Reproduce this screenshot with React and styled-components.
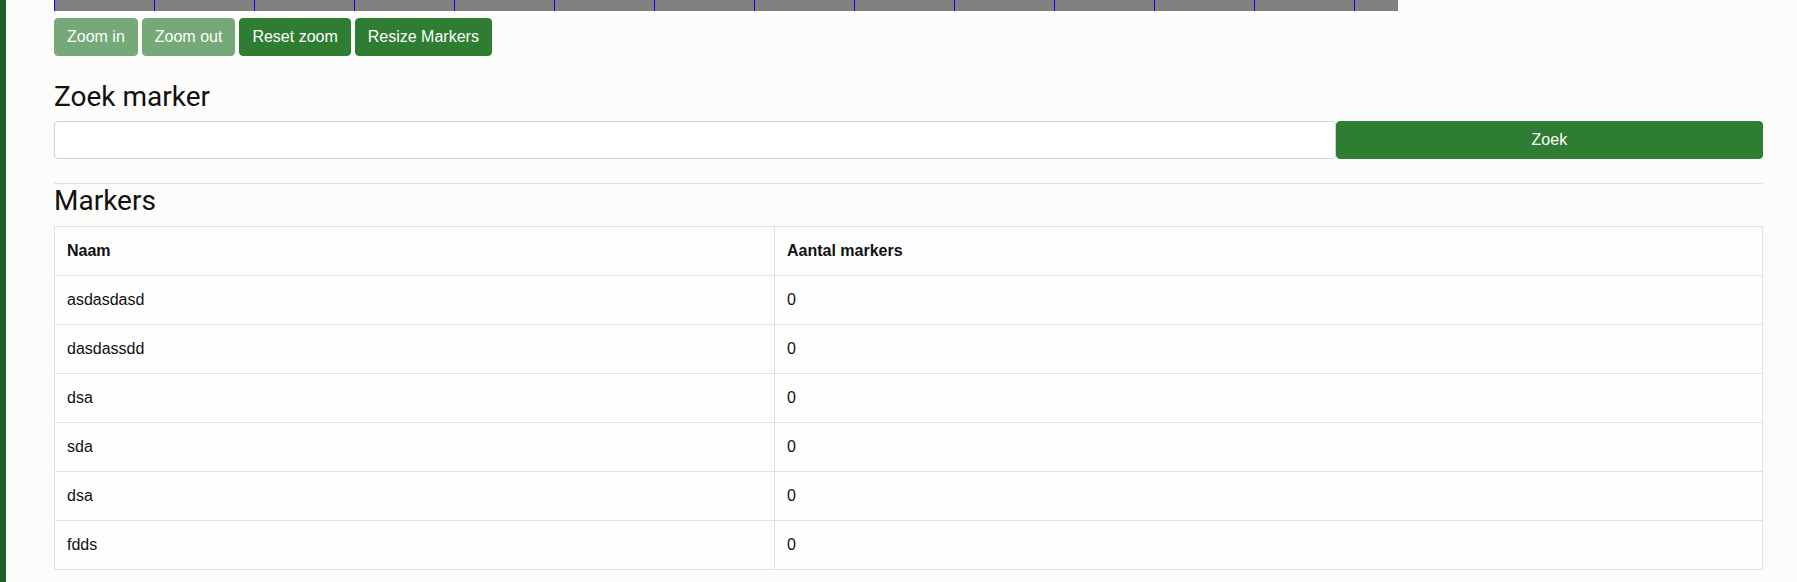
import styled, { createGlobalStyle } from "styled-components"

const GlobalStyle = createGlobalStyle`
  body {
    margin: 0;
    background: #fcfdfa;
    font-family: "Liberation Sans", Arial, sans-serif;
    color: #111;
  }
  * { box-sizing: border-box; }
`

const Page = styled.div`
  min-height: 582px;
  border-left: 6px solid #1f5c26;
  padding: 0 34px 0 48px;
`

const Ruler = styled.div`
  width: 1344px;
  height: 11px;
  display: flex;
  overflow: hidden;
  background: #808080;
`

const Tick = styled.div`
  flex: 0 0 100px;
  height: 100%;
  border-left: 1px solid #0000ff;
`

const Toolbar = styled.div`
  margin-top: 7px;
  display: flex;
  gap: 4px;
`

const Button = styled.button`
  height: 38px;
  padding: 6px 12px;
  font-family: "Liberation Sans", Arial, sans-serif;
  font-size: 16px;
  line-height: 24px;
  color: #fff;
  background: #2e7d32;
  border: 1px solid #2e7d32;
  border-radius: 4px;
  opacity: ${props => (props.disabled ? 0.65 : 1)};
  cursor: pointer;
`

const Heading = styled.h3`
  margin: ${props => (props.first ? "23.5px 0 8px" : "0 0 9px")};
  font-family: Roboto, sans-serif;
  font-weight: 400;
  font-size: 28px;
  line-height: 1.2;
  color: #111;
`

const SearchRow = styled.div`
  display: flex;
`

const SearchInput = styled.input`
  flex: 0 0 75%;
  min-width: 0;
  height: 38px;
  padding: 6px 12px;
  font-size: 16px;
  background: #fff;
  border: 1px solid #ced4da;
  border-radius: 4px;
`

const SearchButton = styled(Button)`
  flex: 1 1 auto;
`

const Divider = styled.hr`
  margin: 23.5px 0 0;
  border: 0;
  border-top: 1px solid #dee2e6;
`

const Table = styled.table`
  width: 100%;
  border-collapse: collapse;
  table-layout: fixed;
  background: #fefefe;
  border: 1px solid #dee2e6;
  font-size: 16px;
  line-height: 24px;
`

const Cell = styled.td`
  padding: 12px;
  border: 1px solid #dee2e6;
  text-align: left;
  font-weight: ${props => (props.head ? 700 : 400)};
`

const markers = [
  { name: "asdasdasd", count: 0 },
  { name: "dasdassdd", count: 0 },
  { name: "dsa", count: 0 },
  { name: "sda", count: 0 },
  { name: "dsa", count: 0 },
  { name: "fdds", count: 0 },
]

const App = () => {
  return (
    <Page>
      <GlobalStyle />
      <Ruler>
        {Array.from({ length: 14 }).map((_, i) => (
          <Tick key={i} />
        ))}
      </Ruler>
      <Toolbar>
        <Button disabled>Zoom in</Button>
        <Button disabled>Zoom out</Button>
        <Button>Reset zoom</Button>
        <Button>Resize Markers</Button>
      </Toolbar>

      <Heading first>Zoek marker</Heading>
      <SearchRow>
        <SearchInput type="text" />
        <SearchButton>Zoek</SearchButton>
      </SearchRow>

      <Divider />
      <Heading>Markers</Heading>
      <Table>
        <colgroup>
          <col style={{ width: "720px" }} />
          <col />
        </colgroup>
        <thead>
          <tr>
            <Cell as="th" head>Naam</Cell>
            <Cell as="th" head>Aantal markers</Cell>
          </tr>
        </thead>
        <tbody>
          {markers.map((m, i) => (
            <tr key={i}>
              <Cell>{m.name}</Cell>
              <Cell>{m.count}</Cell>
            </tr>
          ))}
        </tbody>
      </Table>
    </Page>
  )
}

export default App
